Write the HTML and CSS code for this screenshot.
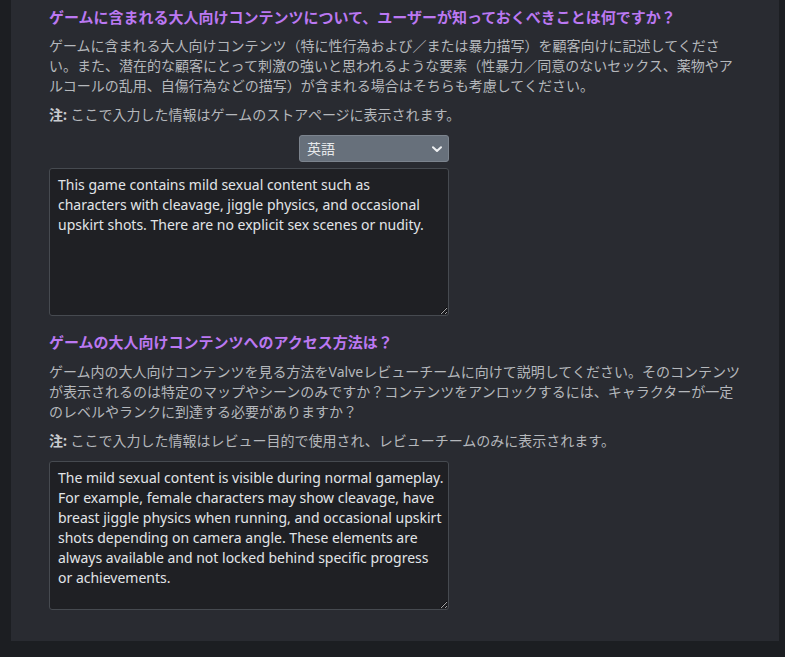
FILE: index.html
```html
<!DOCTYPE html>
<html lang="ja">
<head>
<meta charset="utf-8">
<link rel="stylesheet" href="styles.css">
</head>
<body>
<div class="panel">
  <h3 class="q-title">ゲームに含まれる大人向けコンテンツについて、ユーザーが知っておくべきことは何ですか？</h3>
  <p class="q-desc">ゲームに含まれる大人向けコンテンツ（特に性行為および／または暴力描写）を顧客向けに記述してください。また、潜在的な顧客にとって刺激の強いと思われるような要素（性暴力／同意のないセックス、薬物やアルコールの乱用、自傷行為などの描写）が含まれる場合はそちらも考慮してください。</p>
  <p class="q-note"><b>注:</b> ここで入力した情報はゲームのストアページに表示されます。</p>
  <div class="field">
    <div class="lang-row">
      <div class="select-wrap">
        <select class="lang-select"><option>英語</option></select>
        <svg class="chev" width="10" height="7" viewBox="0 0 10 7"><path d="M1 1.2 L5 5 L9 1.2" fill="none" stroke="#eef0f2" stroke-width="2" stroke-linecap="round" stroke-linejoin="round"/></svg>
      </div>
    </div>
    <textarea class="answer">This game contains mild sexual content such as characters with cleavage, jiggle physics, and occasional upskirt shots. There are no explicit sex scenes or nudity.</textarea>
  </div>

  <h3 class="q-title second">ゲームの大人向けコンテンツへのアクセス方法は？</h3>
  <p class="q-desc">ゲーム内の大人向けコンテンツを見る方法をValveレビューチームに向けて説明してください。そのコンテンツが表示されるのは特定のマップやシーンのみですか？コンテンツをアンロックするには、キャラクターが一定のレベルやランクに到達する必要がありますか？</p>
  <p class="q-note"><b>注:</b> ここで入力した情報はレビュー目的で使用され、レビューチームのみに表示されます。</p>
  <div class="field">
    <textarea class="answer tall">The mild sexual content is visible during normal gameplay. For example, female characters may show cleavage, have breast jiggle physics when running, and occasional upskirt shots depending on camera angle. These elements are always available and not locked behind specific progress or achievements.</textarea>
  </div>
</div>
</body>
</html>
```

FILE: styles.css
```css
html, body {
  margin: 0;
  padding: 0;
  background: #1c1e22;
}
body {
  font-family: "Noto Sans", "Noto Sans CJK JP", sans-serif;
  font-size: 14px;
  line-height: 20px;
  color: #b5b8bc;
  padding-bottom: 16px;
}
.panel {
  margin-left: 11px;
  width: 768px;
  box-sizing: border-box;
  padding: 7px 38px 31px 38px;
  background: #292b31;
}
.q-title {
  margin: 0;
  font-size: 15px;
  line-height: 20px;
  font-weight: bold;
  color: #bb78f2;
}
.q-title.second {
  margin-top: 16px;
}
.q-desc {
  margin: 9px 0 0 0;
}
.q-title.second + .q-desc {
  margin-top: 10px;
}
.q-note {
  margin: 9px 0 0 0;
}
.q-note b {
  color: #c9ccd0;
}
.field {
  width: 400px;
  margin-top: 10px;
  display: flex;
  flex-direction: column;
}
.lang-row {
  display: flex;
  justify-content: flex-end;
  margin-top: 0;
  margin-bottom: 6px;
}
.select-wrap {
  position: relative;
  width: 150px;
  height: 27px;
}
.lang-select {
  appearance: none;
  -webkit-appearance: none;
  width: 150px;
  height: 27px;
  box-sizing: border-box;
  margin: 0;
  padding: 1px 24px 0 7px;
  border: 1px solid #7c848e;
  border-radius: 3px;
  background: #67707b;
  color: #e6e8ea;
  font-family: "Noto Sans", "Noto Sans CJK JP", sans-serif;
  font-size: 14px;
  line-height: 24px;
  outline: none;
}
.chev {
  position: absolute;
  right: 7px;
  top: 11px;
  pointer-events: none;
}
.answer {
  display: block;
  width: 400px;
  height: 148px;
  box-sizing: border-box;
  margin: 0;
  padding: 6px 8px 6px 8px;
  border: 1px solid #464a50;
  border-radius: 3px;
  background: #1f2024;
  color: #e2e5e8;
  font-family: "Noto Sans", "Noto Sans CJK JP", sans-serif;
  font-size: 14px;
  line-height: 20px;
  resize: vertical;
  overflow: hidden;
  outline: none;
}
.answer.tall {
  height: 149px;
  padding-right: 4px;
}
```
